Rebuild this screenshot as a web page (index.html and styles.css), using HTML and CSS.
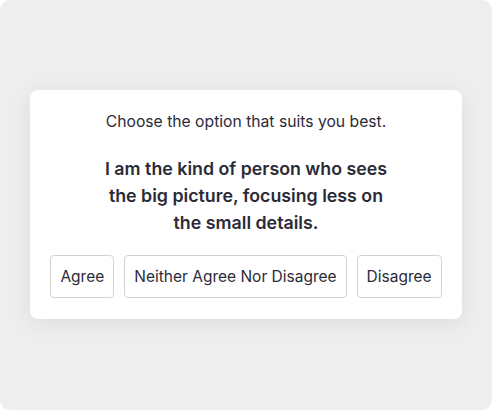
FILE: index.html
```html
<!DOCTYPE html>
<html lang="en">
<head>
    <meta charset="UTF-8">
    <meta name="viewport" content="width=device-width, initial-scale=1.0">
    <title>Question</title>
    <link rel="stylesheet" href="styles.css">
</head>
<body>
    <div class="stage">
        <div class="card">
            <p class="hint">Choose the option that suits you best.</p>
            <h2 class="question">I am the kind of person who sees the big picture, focusing less on the small details.</h2>
            <div class="options">
                <button class="option">Agree</button>
                <button class="option">Neither Agree Nor Disagree</button>
                <button class="option">Disagree</button>
            </div>
        </div>
    </div>
</body>
</html>
```

FILE: styles.css
```css
* {
    box-sizing: border-box;
    margin: 0;
    padding: 0;
}

body {
    background-color: #ffffff;
    font-family: 'Inter', 'Noto Sans', sans-serif;
    color: #2b2b38;
}

.stage {
    width: 492px;
    height: 410px;
    padding-bottom: 1px;
    background-color: #eeeeee;
    border-radius: 10px;
    display: flex;
    align-items: center;
    justify-content: center;
}

.card {
    width: 432px;
    background: white;
    border-radius: 8px;
    box-shadow: 0 4px 24px rgba(0, 0, 0, 0.08);
    padding: 21px 20px 21px;
    text-align: center;
}

.hint {
    font-size: 15.7px;
    line-height: 22px;
}

.question {
    font-size: 17.8px;
    font-weight: 560;
    line-height: 27px;
    width: 300px;
    margin: 22px auto 0;
}

.options {
    display: flex;
    justify-content: center;
    gap: 10px;
    margin-top: 19px;
}

.option {
    font-family: inherit;
    font-size: 15.5px;
    color: #2b2b38;
    background: white;
    border: 1px solid #d2d2d2;
    border-radius: 4px;
    height: 43px;
    padding: 0 9px;
    cursor: pointer;
}
```
